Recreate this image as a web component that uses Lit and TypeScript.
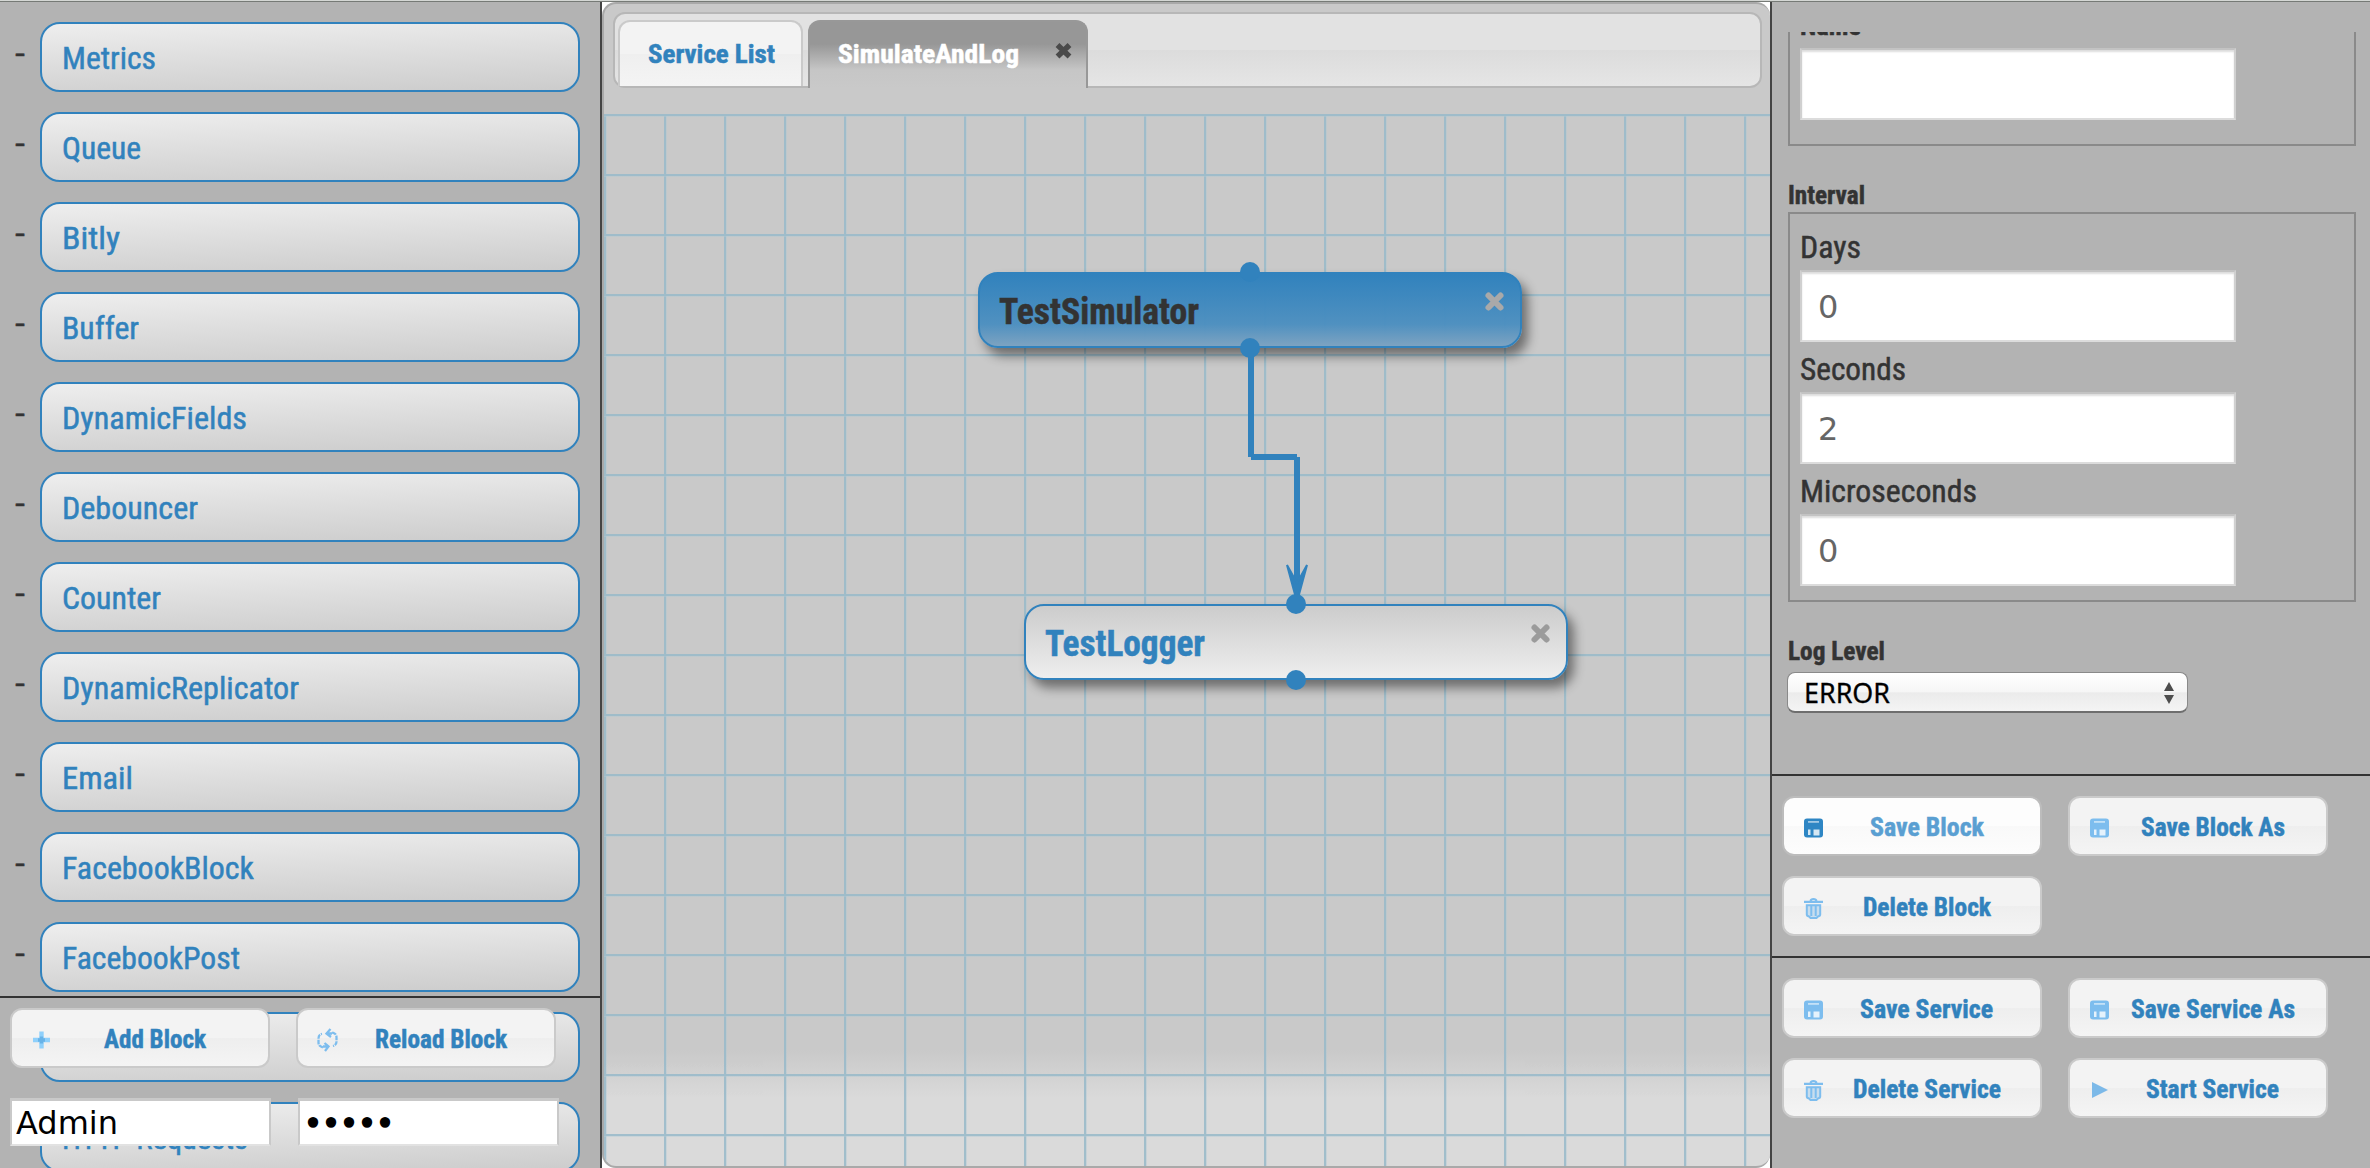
import { LitElement, html, svg, css } from "lit";
import { customElement, property } from "lit/decorators.js";

/** Single-line label whose glyphs are condensed to a given advance width. */
@customElement("fit-text")
export class FitText extends LitElement {
  @property({ type: String }) text = "";
  @property({ type: Number }) w = 0;

  static styles = css`
    :host { display: block; flex: none; white-space: pre; }
    .t { display: inline-block; transform-origin: 0 50%; -webkit-text-stroke: var(--weight, 0.5px) currentColor; }
  `;

  private fit() {
    const el = this.renderRoot.querySelector(".t") as HTMLElement;
    if (!el || !this.w) return;
    el.style.transform = "none";
    const natural = el.getBoundingClientRect().width;
    if (natural > 0) {
      el.style.transform = `scaleX(${this.w / natural})`;
      el.style.marginRight = `${this.w - natural}px`;
    }
    this.style.width = `${this.w}px`;
  }

  updated() {
    this.fit();
    document.fonts?.ready.then(() => this.fit());
  }

  render() {
    return html`<span class="t">${this.text}</span>`;
  }
}

const ICONS: Record<string, unknown> = {
  save: svg`
    <path fill="currentColor" fill-rule="evenodd" d="M5 2.500H18Q21 2.500 21 5.500V18.500Q21 21.500 18 21.500H5Q2 21.500 2 18.500V5.500Q2 2.500 5 2.500Z"/>
    <path fill="#fff" opacity=".8" d="M6 13.500H8.500V19H6ZM11.500 13.500H17.500V19.500H11.500Z"/>
    <path fill="#fff" opacity=".55" d="M6 5H17V6.800H6Z"/>`,
  trash: svg`
    <path fill="none" stroke="currentColor" stroke-width="2.200" d="M2 5.800H21M8.500 4.800Q9 3 11.500 3Q14 3 14.500 4.800"/>
    <path fill="currentColor" opacity=".35" d="M4.800 8.800H18.200V18.500L14.500 22H8.500L4.800 18.500Z"/>
    <path fill="none" stroke="currentColor" stroke-width="2" d="M4.800 9.300H18.200V18.500Q18.200 20 16 20.500L14.500 22H8.500L7 20.500Q4.800 20 4.800 18.500ZM9.300 9V20M13.700 9V20"/>`,
  plus: svg`
    <path fill="#8fd0fb" d="M9.300 3.500H13.700V9.800H20V14.200H13.700V20.500H9.300V14.200H3V9.800H9.300Z"/>
    <path fill="#68b3e8" d="M9.800 8.500H13.200V10.200H15V13.800H13.200V15.500H9.800V13.800H8V10.200H9.800Z"/>`,
  reload: svg`
    <path fill="none" stroke="currentColor" stroke-width="2.300" stroke-dasharray="4.500 1" d="M7 19.500L5 18.500Q2.500 17.500 2.500 14.500V10.500Q2.500 6.500 6 5.800M16 4.500L18 5.200Q20.500 6.200 20.500 9.500V13.500Q20.500 17 17 18"/>
    <path fill="none" stroke="currentColor" stroke-width="2.300" d="M14.500 1L10.500 5.500L15 9M11 5.500H16M8.500 15L12.500 18.500L9 23M7 18.500H12"/>`,
  play: svg`<path fill="#7cb9e8" d="M4 4L20 12L4 20Z"/>`,
};

/** Toolbar button with a leading icon. */
@customElement("tool-button")
export class ToolButton extends LitElement {
  @property() icon = "save";
  @property() label = "";
  @property({ type: Number }) w = 100;
  @property({ type: Boolean, reflect: true }) hovered = false;

  static styles = css`
    :host {
      box-sizing: border-box; display: flex; align-items: center; width: 260px; height: 60px;
      border: 2px solid #cacaca; border-radius: 12px; color: #3182bd;
      background: linear-gradient(#f3f3f3 0 50%, #eeeeee 50%, #f4f4f4 100%);
      font-weight: bold; font-size: 26.4px; letter-spacing: 0;
    }
    :host([hovered]) {
      color: #5a9fd2; border-color: #bcbcbc;
      background: linear-gradient(#fdfdfd 0 50%, #f9f9f9 50%, #fdfdfd 100%);
    }
    .ic { flex: none; width: 23px; height: 24px; margin: 3px 0 0 18px; color: #7dbdee; }
    :host([hovered]) .ic { color: #2e86c4; }
    .lbl { flex: 1; display: flex; justify-content: center; padding: 1px 12px 0 0; }
  `;

  render() {
    return html`
      <svg class="ic" viewBox="0 0 23 24">${ICONS[this.icon]}</svg>
      <div class="lbl"><fit-text .text=${this.label} .w=${this.w}></fit-text></div>
    `;
  }
}

const BLOCKS: [string, number][] = [
  ["Metrics", 94], ["Queue", 79], ["Bitly", 58], ["Buffer", 77], ["DynamicFields", 185],
  ["Debouncer", 136], ["Counter", 99], ["DynamicReplicator", 237], ["Email", 71],
  ["FacebookBlock", 192], ["FacebookPost", 178], ["", 0], ["HTTP Requests", 186],
];

const NODES = [
  { name: "TestSimulator", w: 200, x: 374, y: 270, active: true },
  { name: "TestLogger", w: 160, x: 420, y: 602, active: false },
];

@customElement("app-root")
export class AppRoot extends LitElement {
  static styles = css`
    :host {
      display: block; width: 2370px; height: 1168px; overflow: hidden; background: #fff;
      font-family: "Roboto Condensed", Roboto, "Liberation Sans", sans-serif; font-size: 32px; color: #333;
    }
    * { box-sizing: border-box; }
    .page { display: flex; flex-direction: column; height: 1168px; }
    .strip { flex: none; height: 2px; background: #d4d7d4; border-bottom: 1px solid #767a76; }
    .cols { flex: 1; min-height: 0; display: flex; }

    .left { position: relative; width: 602px; background: #b3b3b3; border-right: 2px solid #444; overflow: hidden; }
    .list { display: flex; flex-direction: column; gap: 20px; padding: 20px 20px 0 0; }
    .row { flex: none; display: flex; align-items: center; height: 70px; }
    .dash { width: 40px; padding: 0 0 9px 15px; }
    .pill {
      flex: 1; height: 70px; display: flex; align-items: center; padding: 2px 0 0 20px;
      border: 2px solid #3182bd; border-radius: 20px; color: #3182bd;
      background: linear-gradient(178deg, #eeeeee, #cccccc);
    }
    .footer { position: absolute; left: 0; bottom: 0; width: 600px; height: 172px; border-top: 2px solid #333; padding: 10px 0 0 10px; }
    .pair { display: flex; gap: 26px; }
    .creds { --weight: 0px; display: flex; gap: 27px; margin-top: 30px; color: #000; font-family: "DejaVu Sans", sans-serif; }
    .cred { width: 261px; height: 48px; background: #fff; border: 2px solid #c9c9c9; border-top-width: 3px; border-bottom-color: #e2e2e2; display: flex; align-items: center; padding-left: 4px; }
    .cred.secret { --weight: 1.5px; padding: 1px 0 0 4px; }

    .mid { position: relative; width: 1168px; border: 2px solid #a9a9a9; border-radius: 14px; overflow: hidden;
      border-right: 0;
      background: linear-gradient(#c9c9c9 0 1042px, #c9c9c9 1046px, #dadada 1094px, #dadada); }
    .tabs { display: flex; height: 76px; margin: 8px 8px 26px 9px; padding: 6px 0 0 3px; border: 2px solid #b7b7b7; border-radius: 12px;
      background: linear-gradient(#e2e2e2 0 50%, #dcdcdc 50%, #e5e5e5); font-size: 26.4px; font-weight: bold; }
    .tab { height: 66px; border-radius: 12px 12px 0 0; display: flex; align-items: center; }
    .tab.idle { width: 185px; border: 2px solid #cacaca; border-bottom: 0; color: #3182bd; padding: 0 0 0 28px;
      background: linear-gradient(#f3f3f3 0 50%, #efefef 50%, #f4f4f4); }
    .tab.on { width: 280px; height: 68px; margin-left: 5px; border: 2px solid #989898; border-bottom: 0; color: #fff; padding: 0 0 2px 28px;
      background: linear-gradient(#979797 0 22px, #c6c6c6 48px, #c9c9c9); }
    .tab.on .x { width: 19px; height: 19px; margin: 0 0 7px 35px; color: #4a4a4a; }
    .x path { fill: none; stroke: currentColor; stroke-width: 5.500; }
    .grid { height: 1052px;
      background-image:
        linear-gradient(#9bbbca 2px, rgba(175, 200, 212, .45) 2px 3px, transparent 3px),
        linear-gradient(90deg, #9bbbca 2px, rgba(175, 200, 212, .45) 2px 3px, transparent 3px);
      background-size: 60px 60px; opacity: .9; }
    .wires { position: absolute; left: 0; top: 0; width: 1166px; height: 1162px; }
    .node { position: absolute; width: 544px; height: 76px; border: 2px solid #3182bd; border-radius: 20px; display: flex;
      justify-content: space-between; padding: 0 14px 0 19px; font-size: 36px; font-weight: bold; color: #3182bd;
      background: linear-gradient(#cccccc, #eeeeee); box-shadow: 6px 8px 11px rgba(0, 0, 0, .45); }
    .node.active { color: #333; background: linear-gradient(rgba(49, 130, 189, 1), rgba(76, 143, 192, .97) 70%, #7da3c1); }
    .node fit-text { align-self: center; padding-top: 3px; }
    .node .x { width: 23px; height: 23px; margin-top: 16px; color: #9b9b9b; }
    .node.active .x { color: #a9a9a9; }
    .node .x path { stroke-linecap: round; stroke-width: 6; }

    .right { width: 600px; background: #b3b3b3; border-left: 2px solid #444; display: flex; flex-direction: column; }
    .scroll { height: 742px; margin-top: 30px; overflow: hidden; padding-left: 16px; flex: none; }
    .set { width: 568px; border: 2px solid #8a8a8a; padding-left: 10px; }
    .set.first { margin-top: -40px; height: 154px; padding-top: 14px; }
    .set.first .head { height: 40px; }
    .set.interval { height: 390px; padding-top: 13px; }
    .head { font-weight: bold; font-size: 26.4px; height: 36px; line-height: 37px; }
    .head.gap { margin-top: 30px; line-height: 38px; }
    .sub { height: 43px; line-height: 40px; }
    .field { width: 436px; height: 72px; margin-bottom: 7px; background: #fff; border: 2px solid #d0d0d0; border-top-color: #c3c3c3; border-bottom-color: #dcdcdc;
      box-shadow: inset 0 2px 2px #ddd; display: flex; align-items: center; padding: 1px 0 0 16px; color: #666; font-family: "DejaVu Sans", sans-serif; }
    .select { --weight: .3px; width: 401px; height: 41px; margin: 4px 0 0 -1px; border-radius: 8px; border: 1px solid #8a8a8a; border-bottom: 2px solid #6e6e6e;
      background: linear-gradient(#fff, #f6f6f6 50%, #ebebeb 52%, #f4f4f4); display: flex; justify-content: space-between; align-items: center;
      padding: 1px 12px 0 16px; color: #000; font-family: "Noto Sans", sans-serif; font-size: 26.400px; line-height: 36px; }
    .arrows { width: 12px; height: 24px; fill: #4d4d4d; }
    .acts { display: grid; grid-template-columns: 260px 260px; gap: 20px 26px; align-content: start; border-top: 2px solid #333; padding: 20px 0 0 10px; flex: none; }
    .acts.block { height: 182px; }
    .acts.service { height: 212px; }
  `;

  private field(label: string, w: number, value: string) {
    return html`
      <div class="sub"><fit-text .text=${label} .w=${w}></fit-text></div>
      <div class="field">${value}</div>`;
  }

  render() {
    return html`
      <div class="page">
        <div class="strip"></div>
        <div class="cols">
          <section class="left">
            <div class="list">
              ${BLOCKS.map(([name, w]) => html`
                <div class="row">
                  <div class="dash">${name === "" ? "" : html`<fit-text text="-" .w=${10}></fit-text>`}</div>
                  <div class="pill">${name === "" ? "" : html`<fit-text .text=${name} .w=${w}></fit-text>`}</div>
                </div>`)}
            </div>
            <div class="footer">
              <div class="pair">
                <tool-button icon="plus" label="Add Block" .w=${102}></tool-button>
                <tool-button icon="reload" label="Reload Block" .w=${132}></tool-button>
              </div>
              <div class="creds">
                <div class="cred"><fit-text text="Admin" .w=${102}></fit-text></div>
                <div class="cred secret"><fit-text text="•••••" .w=${90}></fit-text></div>
              </div>
            </div>
          </section>

          <main class="mid">
            <div class="tabs">
              <div class="tab idle"><fit-text text="Service List" .w=${127}></fit-text></div>
              <div class="tab on">
                <fit-text text="SimulateAndLog" .w=${181}></fit-text>
                <svg class="x" viewBox="0 0 19 19"><path d="M3.500 4L15.500 15.500M15.500 4L3.500 15.500"></path></svg>
              </div>
            </div>
            <div class="grid"></div>
            ${NODES.map((n) => html`
              <div class="node ${n.active ? "active" : ""}" style="left:${n.x}px;top:${n.y - 2}px">
                <fit-text .text=${n.name} .w=${n.w}></fit-text>
                <svg class="x" viewBox="-2 -2 23 23"><path d="M3.500 3.500L15.500 15.500M15.500 3.500L3.500 15.500"></path></svg>
              </div>`)}
            <svg class="wires" viewBox="604 4 1166 1162">
              <g fill="none" stroke="#3182bd" stroke-width="6">
                <path d="M1251 350V457"></path>
                <path d="M1251 457H1297"></path>
                <path d="M1297 457V590"></path>
              </g>
              <path d="M1287 565L1297 602L1307 565L1297 583Z" fill="#3182bd" stroke="#3182bd" stroke-width="2"></path>
              <g fill="#3182bd">
                <circle cx="1250" cy="272" r="10"></circle>
                <circle cx="1250" cy="348" r="10"></circle>
                <circle cx="1296" cy="604" r="10"></circle>
                <circle cx="1296" cy="680" r="10"></circle>
              </g>
            </svg>
          </main>

          <aside class="right">
            <div class="scroll">
              <div class="set first">
                <div class="head"><fit-text text="Name" .w=${61}></fit-text></div>
                <div class="field"></div>
              </div>
              <div class="head gap"><fit-text text="Interval" .w=${77}></fit-text></div>
              <div class="set interval">
                ${this.field("Days", 61, "0")}
                ${this.field("Seconds", 106, "2")}
                ${this.field("Microseconds", 177, "0")}
              </div>
              <div class="head gap"><fit-text text="Log Level" .w=${97}></fit-text></div>
              <div class="select">
                <fit-text text="ERROR" .w=${86}></fit-text>
                <svg class="arrows" viewBox="0 0 12 24"><path d="M6 1L11 10H1ZM6 23L11 14H1Z"></path></svg>
              </div>
            </div>
            <div class="acts block">
              <tool-button icon="save" label="Save Block" .w=${114} hovered></tool-button>
              <tool-button icon="save" label="Save Block As" .w=${144}></tool-button>
              <tool-button icon="trash" label="Delete Block" .w=${128}></tool-button>
            </div>
            <div class="acts service">
              <tool-button icon="save" label="Save Service" .w=${133}></tool-button>
              <tool-button icon="save" label="Save Service As" .w=${164}></tool-button>
              <tool-button icon="trash" label="Delete Service" .w=${148}></tool-button>
              <tool-button icon="play" label="Start Service" .w=${133}></tool-button>
            </div>
          </aside>
        </div>
      </div>
    `;
  }
}
